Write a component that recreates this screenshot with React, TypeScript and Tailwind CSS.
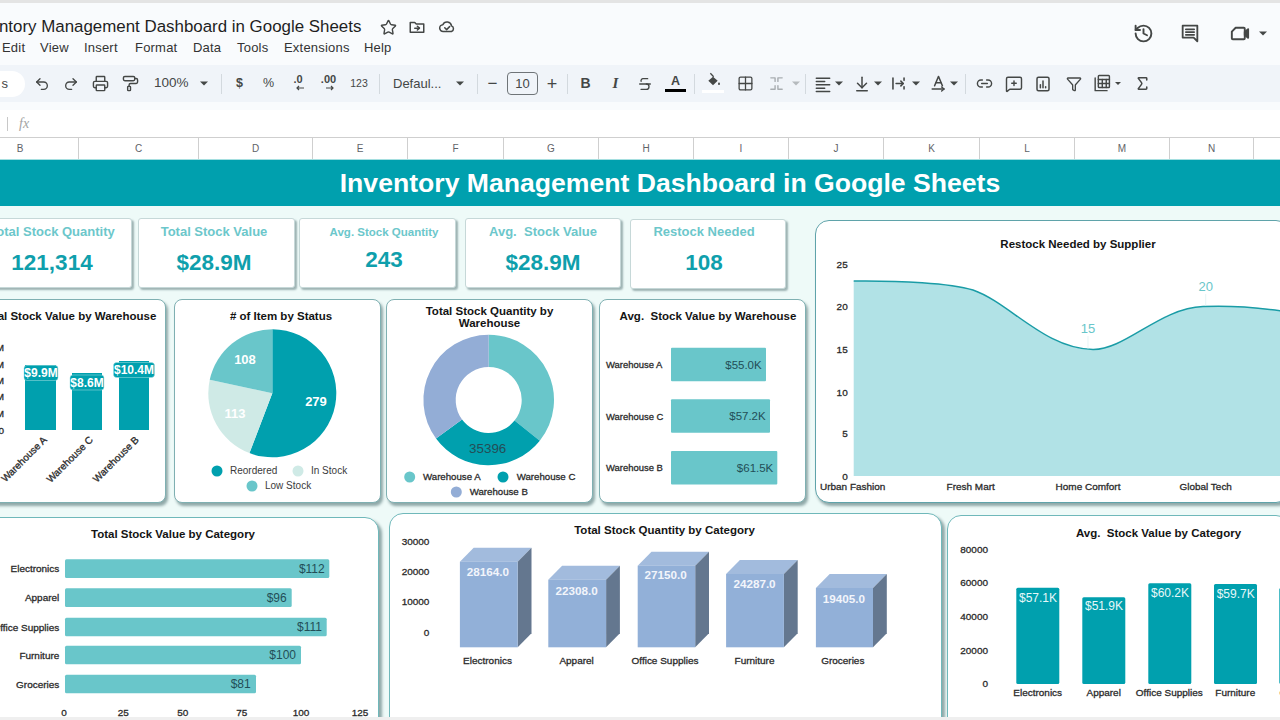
import React from "react";
import {
  Star, History, Undo2, Redo2, Printer, PaintRoller, Strikethrough, Grid2x2, ArrowDownToLine, Link2, MessageSquarePlus, Filter, Sigma,
} from "lucide-react";

const TEAL = "#00a0ae";
const MID = "#69c6ca";
const DARK = "#234e57";
const AXIS = "#2b2b2b";

function T({ x, y, s = 9.5, b = true, f = AXIS, a = "middle", children, extra }: any) {
  const semi = b && s < 10;
  return (
    <text
      x={x}
      y={y}
      fontSize={semi ? s * 1.05 : s}
      fontWeight={b && !semi ? 700 : 400}
      fill={f}
      stroke={semi ? f : undefined}
      strokeWidth={semi ? 0.3 : undefined}
      textAnchor={a}
      dominantBaseline="central"
      {...extra}
    >
      {children}
    </text>
  );
}

function Card({ x, y, w, h, tH, cls, titleCls, title, children }: any) {
  const bw = 1;
  const iw = w - bw * 2;
  const ih = h - bw * 2 - tH;
  return (
    <div className={cls}>
      <div className={titleCls}>{title}</div>
      <svg width={iw} height={ih} viewBox={`${x + bw} ${y + bw + tH} ${iw} ${ih}`} className="block overflow-visible">
        {children}
      </svg>
    </div>
  );
}

function slice(cx: number, cy: number, r: number, r2: number, a0: number, a1: number) {
  const p = (rad: number, a: number) => {
    const t = (a * Math.PI) / 180;
    return `${cx + rad * Math.sin(t)} ${cy - rad * Math.cos(t)}`;
  };
  const large = a1 - a0 > 180 ? 1 : 0;
  if (r2 === 0) return `M${cx} ${cy}L${p(r, a0)}A${r} ${r} 0 ${large} 1 ${p(r, a1)}Z`;
  return `M${p(r2, a0)}L${p(r, a0)}A${r} ${r} 0 ${large} 1 ${p(r, a1)}L${p(r2, a1)}A${r2} ${r2} 0 ${large} 0 ${p(r2, a0)}Z`;
}

function I24({ size = 18, stroke = "#444746", sw = 2, children }: any) {
  return (
    <svg width={size} height={size} viewBox="0 0 24 24" fill="none" stroke={stroke} strokeWidth={sw} strokeLinecap="round" strokeLinejoin="round">
      {children}
    </svg>
  );
}

function Caret({ c = "#444746" }: any) {
  return (
    <svg width="8" height="5" viewBox="0 0 8 5">
      <path d="M0 0.5h8l-4 4z" fill={c} />
    </svg>
  );
}

function Sep({ cls }: any) {
  return (
    <div className={cls}>
      <div className="ml-auto h-[20px] w-px bg-[#d3d9de]" />
    </div>
  );
}

const cols: [string, string][] = [
  ["B", "w-[117px] -ml-[38px]"], ["C", "w-[120px]"], ["D", "w-[114px]"], ["E", "w-[95px]"], ["F", "w-[96px]"], ["G", "w-[95px]"], ["H", "w-[95px]"],
  ["I", "w-[95px]"], ["J", "w-[95px]"], ["K", "w-[96px]"], ["L", "w-[95px]"], ["M", "w-[95px]"], ["N", "w-[84px]"], ["O", "w-[95px]"],
];

const smallCard = "shrink-0 w-[207px] h-[204px] bg-white rounded-[8px] border border-[#7fb0b2] shadow-[2px_3px_3px_#8fa8a8] overflow-hidden";
const titleText = "font-bold text-[11.5px] text-[#141414] text-center whitespace-pre";

function Kpi({ cls, title, tCls, value, vCls }: any) {
  return (
    <div className={cls}>
      <div className={tCls}>{title}</div>
      <div className={vCls}>{value}</div>
    </div>
  );
}

const kBase = "shrink-0 bg-white rounded-[3px] border border-[#c6d8d8] shadow-[2px_2px_2px_#9db3b3] flex flex-col items-center ";
const kT = "font-bold text-[13px] text-[#6cc7cb] leading-[18px] whitespace-pre";
const kV = "font-bold text-[22.5px] text-[#0f9fac] leading-[26px] mt-[8px]";

export default function App() {
  return (
    <div className="w-[1280px] h-[720px] overflow-hidden flex flex-col bg-white font-['Liberation_Sans',Arial,sans-serif]">
      <div className="h-[3px] shrink-0 bg-[#e4e4e4]" />
      {/* Title + menu */}
      <div className="h-[62px] shrink-0 bg-[#f9fbfd] flex justify-between">
        <div className="flex flex-col">
          <div className="flex items-center h-[24px] mt-[12px] -ml-[33px]">
            <span className="text-[16.9px] text-[#1f1f1f] whitespace-nowrap">Inventory Management Dashboard in Google Sheets</span>
            <span className="ml-[19px] w-[17px]"><Star size={17} color="#444746" strokeWidth={2} /></span>
            <span className="ml-[11px] w-[18px]">
              <I24><path d="M3 6h6l2 2h10v11H3z" /><path d="M9 13.5h6" /><path d="M12.5 11l2.8 2.5-2.8 2.5" /></I24>
            </span>
            <span className="ml-[12px] w-[18px]">
              <I24><path d="M7 18a4.5 4.5 0 0 1-.5-9 6 6 0 0 1 11.5 1.5A4 4 0 0 1 18 18z" /><path d="M9 13l2.5 2.5 4-4" /></I24>
            </span>
          </div>
          <div className="flex text-[13px] text-[#333] h-[18px] items-center tracking-[0.2px]">
            <span className="ml-[2px] w-[38px]">Edit</span>
            <span className="w-[44px]">View</span>
            <span className="w-[51px]">Insert</span>
            <span className="w-[58px]">Format</span>
            <span className="w-[44px]">Data</span>
            <span className="w-[47px]">Tools</span>
            <span className="w-[80px]">Extensions</span>
            <span>Help</span>
          </div>
        </div>
        <div className="flex items-center h-[60px] pr-[13px]">
          <span className="mr-[25px]"><History size={21} color="#444746" strokeWidth={2.2} /></span>
          <span className="mr-[27px]">
            <I24 size={22}><path d="M4 4h16v17l-4-4H4z" /><path d="M7.5 8h9" /><path d="M7.5 11h9" /><path d="M7.5 14h9" /></I24>
          </span>
          <span className="mr-[8px]">
            <I24 size={23}><path d="M8 6h8.5a1 1 0 0 1 1 1v10a1 1 0 0 1-1 1H5a1 1 0 0 1-1-1V10z" /><path d="M17.5 10.5 21 7.5v9l-3.500-3z" fill="#444746" /></I24>
          </span>
          <Caret />
        </div>
      </div>
      {/* Toolbar */}
      <div className="h-[37px] shrink-0 bg-[#f0f4f9] flex items-center text-[#444746]">
        <div className="-ml-[30px] w-[55px] h-[26px] rounded-full bg-white flex items-center justify-end pr-[17px] text-[13px] mr-[2.5px]">s</div>
        <div className="w-[29px] flex justify-center"><Undo2 size={16} strokeWidth={2} /></div>
        <div className="w-[29px] flex justify-center"><Redo2 size={16} strokeWidth={2} /></div>
        <div className="w-[30.500px] flex justify-center"><Printer size={17} strokeWidth={2} /></div>
        <div className="w-[29px] flex justify-center"><PaintRoller size={17} strokeWidth={2} /></div>
        <div className="w-[52px] pl-[9px] text-[13.5px]">100%</div>
        <div className="w-[14px] flex justify-center"><Caret /></div>
        <Sep cls="w-[11px]" />
        <div className="w-[35px] text-center text-[12.5px] font-bold">$</div>
        <div className="w-[23px] text-center text-[12.5px]">%</div>
        <div className="w-[36px] flex flex-col items-center leading-none text-[11px] font-bold">
          <span className="-mt-[3px]">.0</span>
          <svg width="10" height="6" viewBox="0 0 10 6" className="ml-[3px]"><path d="M9 3H2M4 1 2 3l2 2" stroke="#444746" strokeWidth="1.2" fill="none" /></svg>
        </div>
        <div className="w-[25px] flex flex-col items-center leading-none text-[11px] font-bold">
          <span className="-mt-[3px]">.00</span>
          <svg width="10" height="6" viewBox="0 0 10 6" className="ml-[3px]"><path d="M1 3h7M6 1l2 2-2 2" stroke="#444746" strokeWidth="1.2" fill="none" /></svg>
        </div>
        <div className="w-[36px] text-center text-[10.5px]">123</div>
        <Sep cls="w-[3px]" />
        <div className="w-[67px] pl-[13px] text-[13px] whitespace-nowrap">Defaul...</div>
        <div className="w-[26px] flex justify-center"><Caret /></div>
        <Sep cls="w-[5px]" />
        <div className="w-[29px] text-center text-[17px] leading-none">−</div>
        <div className="w-[31px] h-[23px] border border-[#6f7478] rounded-[4px] flex items-center justify-center text-[13px]">10</div>
        <div className="w-[28px] text-center text-[18px] leading-none">+</div>
        <Sep cls="w-[2px]" />
        <div className="w-[35px] text-center text-[14px] font-bold">B</div>
        <div className="w-[25px] text-center text-[15px] italic font-bold font-['Liberation_Serif',serif]">I</div>
        <div className="w-[34px] flex justify-center"><Strikethrough size={16} strokeWidth={2} /></div>
        <div className="w-[27px] flex flex-col items-center">
          <span className="text-[12.5px] font-bold leading-[13px]">A</span>
          <div className="w-[21px] h-[3px] bg-black mt-px" />
        </div>
        <Sep cls="w-[6px]" />
        <div className="w-[36px] flex flex-col items-center -mt-[3px]">
          <svg width="16" height="16" viewBox="0 0 24 24"><path d="M12 7 19 13 12 20 5 13z" fill="#444746" /><path d="M8 2l5 5" stroke="#444746" strokeWidth="2" /><path d="M21 15c1 1.500 1.500 2.200 1.500 3a1.500 1.500 0 0 1-3 0c0-.8.5-1.500 1.500-3z" fill="#444746" /></svg>
          <div className="w-[22px] h-[3px] bg-white mt-[2px]" />
        </div>
        <div className="w-[29px] flex justify-center"><Grid2x2 size={17} strokeWidth={1.8} /></div>
        <div className="w-[32px] flex justify-center">
          <I24 size={17} stroke="#a8adb1"><path d="M4 4h6v5" /><path d="M20 4h-6v5" /><path d="M4 20h6v-5" /><path d="M20 20h-6v-5" /></I24>
        </div>
        <div className="w-[8px] flex justify-center"><Caret c="#b5babd" /></div>
        <Sep cls="w-[6px]" />
        <div className="w-[26.700px] flex justify-end">
          <I24 size={20} sw={1.8}><path d="M4 5h16" /><path d="M4 9h10" /><path d="M4 13h16" /><path d="M4 17h10" /><path d="M4 21h16" /></I24>
        </div>
        <div className="w-[13px] flex justify-center"><Caret /></div>
        <div className="w-[25.300px] flex justify-end"><ArrowDownToLine size={18} strokeWidth={2} /></div>
        <div className="w-[14px] flex justify-center"><Caret /></div>
        <div className="w-[23.400px] flex justify-end">
          <I24 size={19}><path d="M5 5v14" /><path d="M19 5v3" /><path d="M19 16v3" /><path d="M9 12h9" /><path d="M15 9l3 3-3 3" /></I24>
        </div>
        <div className="w-[15px] flex justify-center"><Caret /></div>
        <div className="w-[24.400px] flex justify-end">
          <I24 size={19} sw={1.8}><path d="M7 15 12 3l5 12" /><path d="M9 11h6" /><path d="M4 19h15" /><path d="M16 16.500 19 19l-3 2.500" /></I24>
        </div>
        <div className="w-[12.600px] flex justify-center"><Caret /></div>
        <Sep cls="w-[6px]" />
        <div className="w-[36px] flex justify-center"><Link2 size={17} strokeWidth={2} /></div>
        <div className="w-[23.400px] flex justify-center"><MessageSquarePlus size={18} strokeWidth={1.9} /></div>
        <div className="w-[35.200px] flex justify-center">
          <I24 size={18}><rect x="4" y="3" width="16" height="18" rx="2" /><path d="M8.500 17v-4" /><path d="M12 17V8" /><path d="M15.500 17v-1.500" /></I24>
        </div>
        <div className="w-[26.200px] flex justify-center"><Filter size={16} strokeWidth={2} /></div>
        <div className="w-[28.200px] flex justify-center">
          <I24 size={19} sw={1.8}><path d="M4 5v16h15" /><rect x="8" y="2" width="14" height="15" rx="1" /><path d="M8 7h14" /><path d="M8 12h14" /><path d="M13 7v10" /><path d="M18 7v10" /></I24>
        </div>
        <div className="w-[6px] flex justify-center"><Caret /></div>
        <div className="w-[42px] flex justify-center"><Sigma size={17} strokeWidth={2.2} /></div>
      </div>
      <div className="h-[8px] shrink-0 bg-[#f9fbfd]" />
      {/* Formula bar */}
      <div className="h-[27px] shrink-0 bg-white flex items-center">
        <div className="ml-[7px] w-px h-[14px] bg-[#c8c8c8]" />
        <span className="ml-[11px] text-[14px] italic text-[#a3a3a3] font-['Liberation_Serif',serif]">fx</span>
      </div>
      {/* Column headers */}
      <div className="h-[22px] shrink-0 bg-white border-t border-[#cfcfcf] flex">
        {cols.map(([c, w]) => (
          <div key={c} className={"shrink-0 border-r border-[#cfcfcf] flex items-center justify-center text-[10px] text-[#5f6368] " + w}>
            <span>{c}</span>
          </div>
        ))}
      </div>
      <div className="h-[1px] shrink-0 bg-[#a5dfe0]" />
      {/* Banner */}
      <div className="h-[46px] shrink-0 bg-[#00a0ae] flex items-center justify-center pl-[60px] pt-[2px] text-white font-bold text-[26.6px] whitespace-nowrap">
        Inventory Management Dashboard in Google Sheets
      </div>
      {/* Dashboard */}
      <div className="flex-1 min-h-0 bg-[#eefaf8] overflow-hidden flex flex-col">
        <div className="flex shrink-0 pt-[12px] -ml-[41px] w-[1331px]">
          <div className="w-[847px] shrink-0 flex flex-col">
            <div className="flex h-[71px] ml-[13px]">
              <Kpi cls={kBase + "w-[160px] h-[70px] pt-[4px]"} tCls={kT} title="Total Stock Quantity" value="121,314" vCls={kV + " mt-[9px]"} />
              <Kpi cls={kBase + "w-[157px] h-[70px] pt-[4px] ml-[6px] pr-[5px]"} tCls={kT} title="Total Stock Value" value="$28.9M" vCls={kV + " mt-[9px]"} />
              <Kpi cls={kBase + "w-[157px] h-[70px] pt-[5px] ml-[4px] pl-[13px]"} tCls="font-bold text-[11.5px] text-[#6cc7cb] leading-[16px] whitespace-nowrap" title="Avg. Stock Quantity" value="243" vCls="font-bold text-[22.5px] text-[#0f9fac] leading-[26px] mt-[7px]" />
              <Kpi cls={kBase + "w-[156px] h-[70px] pt-[4px] ml-[9px]"} tCls={kT} title="Avg.  Stock Value" value="$28.9M" vCls={kV + " mt-[9px]"} />
              <Kpi cls={kBase + "w-[156px] h-[70px] pt-[3px] ml-[9px] mt-px pr-[8px]"} tCls={kT} title="Restock Needed" value="108" vCls={kV + " mt-[9px]"} />
            </div>
            <div className="flex mt-[10px]">
              {/* Stock value by warehouse */}
              <Card x={-41} y={299} w={207} h={204} tH={33} cls={smallCard} titleCls={"h-[33px] flex items-center justify-center pl-[12px] " + titleText} title="Total Stock Value by Warehouse">
                {[["$12M", 347], ["$10M", 364], ["$8M", 380], ["$6M", 396], ["$4M", 413], ["$2M", 430]].map(([l, y], i) => (
                  <T key={i} x={4} y={y} a="end">{i === 5 ? "0" : l}</T>
                ))}
                {[[25, 31, 365], [72, 30, 373], [119, 30, 361]].map(([x, w, y]) => (
                  <rect key={x} x={x} y={y} width={w} height={430 - y} fill={TEAL} />
                ))}
                {[[41, 373, "$9.9M", 34], [87, 382.5, "$8.6M", 34], [134, 370, "$10.4M", 41]].map(([x, y, l, w]: any) => (
                  <g key={l}>
                    <rect x={x - w / 2} y={y - 7.5} width={w} height={15} rx={3} fill={TEAL} stroke="#a8e0e3" strokeWidth={0.5} />
                    <T x={x} y={y} s={12} f="#fff">{l}</T>
                  </g>
                ))}
                {[[45, "Warehouse A"], [91, "Warehouse C"], [137, "Warehouse B"]].map(([x, l]: any) => (
                  <T key={l} x={x} y={438} a="end" extra={{ transform: `rotate(-45 ${x} 438)` }} s={9.5}>{l}</T>
                ))}
              </Card>
              {/* Status pie */}
              <div className="ml-[8px]">
                <Card x={174} y={299} w={207} h={204} tH={33} cls={smallCard} titleCls={"h-[33px] flex items-center justify-center pl-[7px] " + titleText} title="# of Item by Status">
                  <path d={slice(272.3, 393.3, 64, 0, 0, 200.9)} fill={TEAL} />
                  <path d={slice(272.3, 393.3, 64, 0, 200.9, 282.2)} fill="#cfeae6" />
                  <path d={slice(272.3, 393.3, 64, 0, 282.2, 360)} fill={MID} />
                  <T x={245} y={359} s={13} f="#fff">108</T>
                  <T x={235} y={413} s={13} f="#fff">113</T>
                  <T x={316} y={401} s={13} f="#fff">279</T>
                  <circle cx={217} cy={471} r={5.5} fill={TEAL} />
                  <T x={230} y={470.5} a="start" b={false} s={10} f="#3b3b3b">Reordered</T>
                  <circle cx={298} cy={471} r={5.5} fill="#cfeae6" />
                  <T x={311} y={470.5} a="start" b={false} s={10} f="#3b3b3b">In Stock</T>
                  <circle cx={252} cy={486} r={5.5} fill={MID} />
                  <T x={265} y={485.5} a="start" b={false} s={10} f="#3b3b3b">Low Stock</T>
                </Card>
              </div>
              {/* Donut */}
              <div className="ml-[5px]">
                <Card x={386} y={299} w={207} h={204} tH={33} cls={smallCard} titleCls={"h-[33px] flex items-center justify-center leading-[12px] " + titleText} title={"Total Stock Quantity by\nWarehouse"}>
                  <path d={slice(488.7, 400, 65.3, 33, 0, 128.5)} fill={MID} />
                  <path d={slice(488.7, 400, 65.3, 33, 128.5, 233.8)} fill={TEAL} />
                  <path d={slice(488.7, 400, 65.3, 33, 233.8, 360)} fill="#93add6" />
                  <T x={487.7} y={448} s={13.4} b={false} f={DARK}>35396</T>
                  <circle cx={409.7} cy={477} r={5.5} fill={MID} />
                  <T x={423} y={476.3} a="start" s={9.2}>Warehouse A</T>
                  <circle cx={503} cy={477} r={5.5} fill={TEAL} />
                  <T x={516.7} y={476.3} a="start" s={9.2}>Warehouse C</T>
                  <circle cx={456.3} cy={492} r={5.5} fill="#93add6" />
                  <T x={469.7} y={491.3} a="start" s={9.2}>Warehouse B</T>
                </Card>
              </div>
              {/* Avg value by warehouse */}
              <div className="ml-[6px]">
                <Card x={599} y={299} w={207} h={204} tH={33} cls={smallCard} titleCls={"h-[33px] flex items-center justify-center pl-[11px] " + titleText} title="Avg.  Stock Value by Warehouse">
                  {[["Warehouse A", 364.5, 347.7, 766, "$55.0K", 761.7], ["Warehouse C", 416, 399.3, 770, "$57.2K", 765.7], ["Warehouse B", 467.5, 451, 777.3, "$61.5K", 773.3]].map(([n, cy, y, e, l, lx]: any) => (
                    <g key={n}>
                      <T x={606} y={cy} a="start" s={9}>{n}</T>
                      <rect x={671} y={y} width={e - 671} height={33.500} rx={1} fill={MID} />
                      <T x={lx} y={cy} a="end" s={11.5} b={false} f={DARK}>{l}</T>
                    </g>
                  ))}
                </Card>
              </div>
            </div>
          </div>
          {/* Restock */}
          <div className="ml-[9px] mt-[2px]">
            <Card x={815} y={220} w={475} h={283} tH={48} cls="w-[475px] h-[283px] bg-white rounded-[14px] border-[1.5px] border-[#5fa3aa] shadow-[2px_3px_3px_#8fa8a8] overflow-hidden" titleCls={"h-[48px] flex items-center justify-center pl-[51px] " + titleText} title="Restock Needed by Supplier">
              {[["25", 264.3], ["20", 306.7], ["15", 349], ["10", 392], ["5", 433.5], ["0", 476]].map(([l, y]: any) => (
                <T key={l} x={847.7} y={y} a="end">{l}</T>
              ))}
              <path d="M853.7 281C900 280.500 950 283 973 290C1010 303 1045 349 1093 349.500C1125 350 1160 308 1203 306.500C1225 305.500 1250 306 1289 312V476H853.7Z" fill="#b1e2e6" />
              <path d="M853.7 281C900 280.500 950 283 973 290C1010 303 1045 349 1093 349.500C1125 350 1160 308 1203 306.500C1225 305.500 1250 306 1289 312" fill="none" stroke="#1a9ca6" strokeWidth={1.5} />
              <path d="M1088 336v13M1205.700 294v12" stroke="#d9eeef" strokeWidth={0.6} />
              <T x={1088} y={328} s={13} b={false} f={MID}>15</T>
              <T x={1205.7} y={286} s={13} b={false} f={MID}>20</T>
              {[["Urban Fashion", 852.7], ["Fresh Mart", 970.7], ["Home Comfort", 1088], ["Global Tech", 1205.7]].map(([l, x]: any) => (
                <T key={l} x={x} y={486}>{l}</T>
              ))}
            </Card>
          </div>
        </div>
        {/* Bottom row */}
        <div className="flex shrink-0 items-start -ml-[41px] w-[1331px]">
          <div className="mt-[14px]">
            <Card x={-41} y={517} w={420} h={240} tH={33} cls="w-[420px] h-[240px] bg-white rounded-[14px] border border-[#6fb8ba] shadow-[3px_3px_3px_#8fa8a8] overflow-hidden" titleCls={"h-[33px] flex items-center justify-center pl-[8px] " + titleText} title="Total Stock Value by Category">
              {[["Electronics", 568.6, 329.3, "$112", 324.7], ["Apparel", 597.6, 291.7, "$96", 286.7], ["Office Supplies", 627, 326.7, "$111", 322], ["Furniture", 655, 301, "$100", 296], ["Groceries", 684, 256, "$81", 250.7]].map(([n, cy, e, l, lx]: any) => (
                <g key={n}>
                  <T x={59.3} y={cy} a="end">{n}</T>
                  <rect x={65} y={cy - 9.3} width={e - 65} height={18.600} rx={1.5} fill={MID} />
                  <T x={lx} y={cy} a="end" s={12} b={false} f={DARK}>{l}</T>
                </g>
              ))}
              {[["0", 64], ["25", 123.3], ["50", 182.7], ["75", 241.7], ["100", 301], ["125", 360]].map(([l, x]: any) => (
                <T key={l} x={x} y={712.7}>{l}</T>
              ))}
            </Card>
          </div>
          <div className="mt-[10px] ml-[10px]">
            <Card x={389} y={513} w={553} h={240} tH={33} cls="w-[553px] h-[240px] bg-white rounded-[14px] border border-[#6fb8ba] shadow-[3px_3px_3px_#8fa8a8] overflow-hidden" titleCls={"h-[33px] flex items-center justify-center pr-[2px] " + titleText} title="Total Stock Quantity by Category">
              {[["30000", 541.7], ["20000", 571.7], ["10000", 601.7], ["0", 632]].map(([l, y]: any) => (
                <T key={l} x={429.4} y={y} a="end">{l}</T>
              ))}
              {[[459.9, 517.7, 561.7, "28164.0", 487.9, 571.3, "Electronics", 487.5], [548.3, 606.1, 579.7, "22308.0", 576.6, 590, "Apparel", 576.6], [637.7, 695.2, 565.7, "27150.0", 665.7, 574.7, "Office Supplies", 665], [726.1, 783.9, 574, "24287.0", 754.5, 583, "Furniture", 754.5], [815.9, 873, 588, "19405.0", 843.9, 598, "Groceries", 842.8]].map(([x0, x1, t, l, lx, ly, n, nx]: any) => (
                <g key={n}>
                  <path d={`M${x0} ${t}l13.800 -14H${x1 + 13.8}l-13.800 14z`} fill="#a2bbdd" />
                  <path d={`M${x1} ${t}l13.800 -14V633.300l-13.800 14z`} fill="#64778f" />
                  <rect x={x0} y={t} width={x1 - x0} height={647.3 - t} fill="#92b0d8" />
                  <T x={lx} y={ly} s={11.7} f="#f2f5fb">{l}</T>
                  <T x={nx} y={660.7}>{n}</T>
                </g>
              ))}
            </Card>
          </div>
          <div className="mt-[12px] ml-[5px]">
            <Card x={947} y={515} w={343} h={240} tH={36} cls="w-[343px] h-[240px] bg-white rounded-[14px] border border-[#6fb8ba] shadow-[3px_3px_3px_#8fa8a8] overflow-hidden" titleCls={"h-[36px] flex items-center justify-center pl-[80px] " + titleText} title="Avg.  Stock Value by Category">
              {[["80000", 549.3], ["60000", 582.5], ["40000", 616], ["20000", 650], ["0", 683.3]].map(([l, y]: any) => (
                <T key={l} x={988} y={y} a="end">{l}</T>
              ))}
              {[[1016.3, 587.7, "$57.1K", 1038, 597.7, "Electronics", 1037.7], [1082.3, 597.3, "$51.9K", 1104, 605.7, "Apparel", 1103.7], [1148.3, 583.3, "$60.2K", 1170, 592.7, "Office Supplies", 1169.3], [1214, 584, "$59.7K", 1235.7, 593.7, "Furniture", 1235.3], [1279.3, 588, "", 0, 0, "Groceries", 1301]].map(([x, t, l, lx, ly, n, nx]: any) => (
                <g key={n}>
                  <rect x={x} y={t} width={43} height={684 - t} rx={1.5} fill={TEAL} />
                  {l ? <T x={lx} y={ly} s={12} b={false} f="#e6f8f9">{l}</T> : null}
                  <T x={nx} y={692.7}>{n}</T>
                </g>
              ))}
            </Card>
          </div>
        </div>
      </div>
      <div className="h-[3px] shrink-0 bg-[#efefef]" />
    </div>
  );
}
